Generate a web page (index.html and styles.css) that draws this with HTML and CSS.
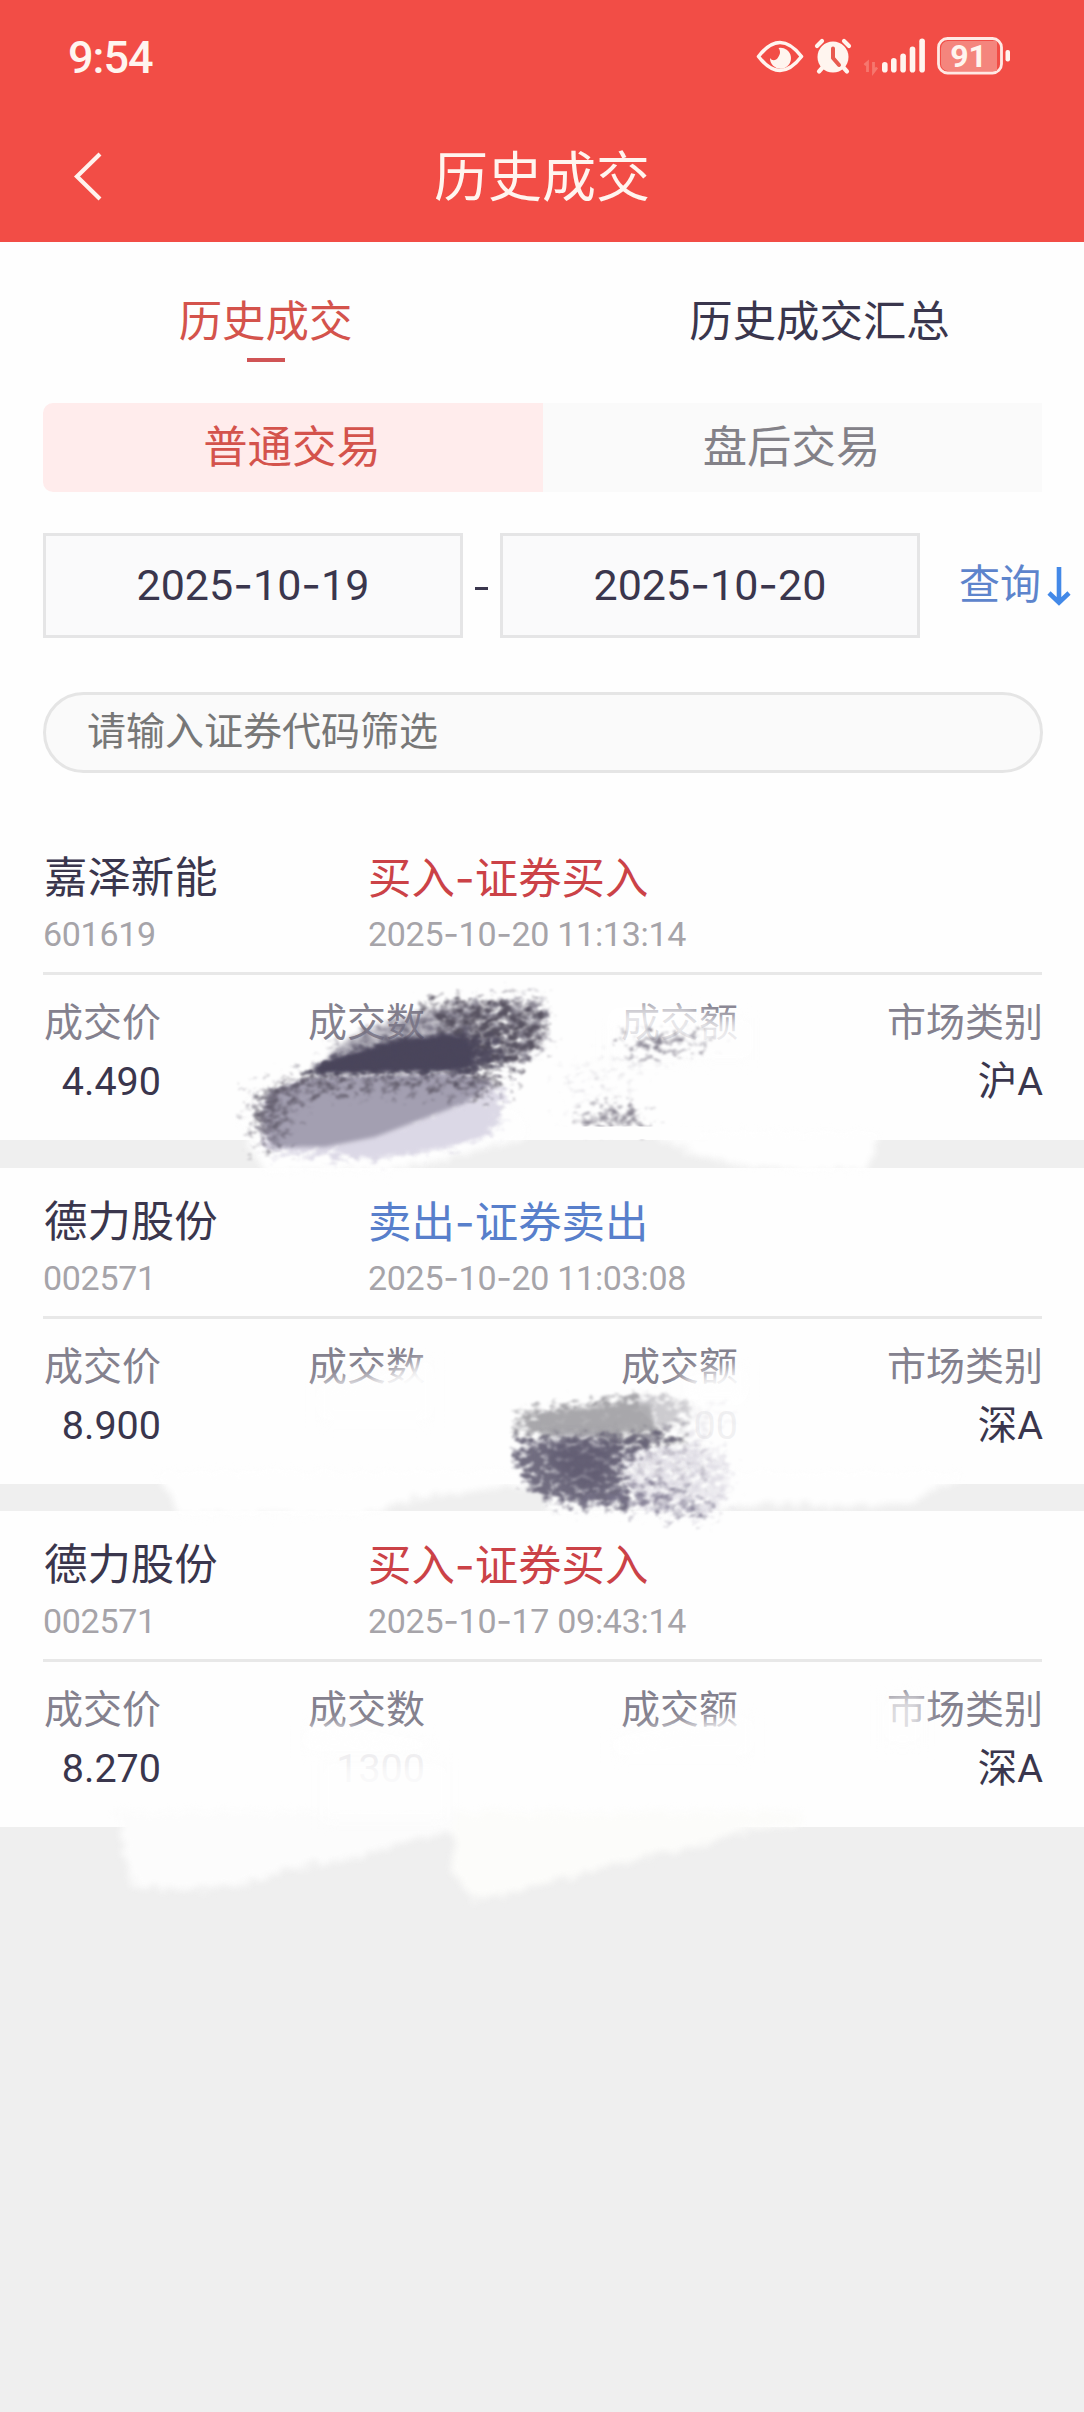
FILE: index.html
```html
<!DOCTYPE html>
<html lang="zh-CN">
<head>
<meta charset="utf-8">
<title>历史成交</title>
<link rel="stylesheet" href="styles.css">
</head>
<body>
<header class="top">
  <div class="status">
    <span class="clock">9:54</span>
    <svg class="status-icons" width="256" height="44" viewBox="756 34 256 44" fill="#fff5ef">
      <path d="M758.500 56.500Q780 28.500 801.500 56.500Q780 84.500 758.500 56.500Z" fill="none" stroke="#fff5ef" stroke-width="3.600" stroke-linejoin="round"/>
      <path d="M778.500 48a10.500 10.500 0 1 1-8.500 10c2 3 6 3 8-.5c1-2 2-3 2-5c0-2-.5-3-1.500-4.500Z"/>
      <circle cx="833" cy="57" r="15.500"/>
      <path d="M817 46l5-5M849 46l-5-5M823 67l-4 4.500M843 67l4 4.500" stroke="#fff5ef" stroke-width="4.200" stroke-linecap="round"/>
      <path d="M833 48.500V58l6 7" fill="none" stroke="#e85b50" stroke-width="4" stroke-linecap="round" stroke-linejoin="round"/>
      <path d="M864.500 65l3-2.500V72M873.500 62v10l3.500-4.500" fill="none" stroke="#f6776e" stroke-width="2.800"/>
      <rect x="882" y="62" width="5.600" height="10.500" rx="2.800"/>
      <rect x="891" y="58" width="5.600" height="14.500" rx="2.800"/>
      <rect x="900.300" y="53.500" width="5.600" height="19" rx="2.800"/>
      <rect x="909.700" y="46.500" width="5.600" height="26" rx="2.800"/>
      <rect x="919.300" y="38.500" width="5.600" height="34" rx="2.800"/>
      <rect x="938.500" y="38.500" width="63" height="34.500" rx="9" fill="none" stroke="#ffe9e4" stroke-width="2.800"/>
      <path d="M948 41h49v30h-49a7 7 0 0 1-7-7V48a7 7 0 0 1 7-7Z" fill="#f4857d"/>
      <rect x="1005.500" y="50" width="4.500" height="11.500" rx="2"/>
      <text class="battery" x="968.500" y="66.800" text-anchor="middle">91</text>
    </svg>
  </div>
  <div class="nav">
    <svg class="back" width="32" height="50" viewBox="0 0 32 50"><path d="M27 3L4 25.500L27 48" fill="none" stroke="#fff3ee" stroke-width="4.200"/></svg>
    <h1>历史成交</h1>
  </div>
</header>

<main class="panel">
  <nav class="tabs">
    <a class="tab active">历史成交</a>
    <a class="tab">历史成交汇总</a>
  </nav>
  <div class="segments">
    <span class="segment active">普通交易</span>
    <span class="segment">盘后交易</span>
  </div>
  <div class="range">
    <span class="date">2025<i>-</i>10<i>-</i>19</span>
    <span class="to"></span>
    <span class="date">2025<i>-</i>10<i>-</i>20</span>
    <a class="query">查询</a>
    <svg class="arrow" width="24" height="40" viewBox="0 0 24 40"><path d="M12 1V36M2 27L12 36.500L22 27" fill="none" stroke="#4389e8" stroke-width="4.600"/></svg>
  </div>
  <div class="search">请输入证券代码筛选</div>
</main>

<section class="list">
  <article class="trade">
    <div class="head">
      <span class="name">嘉泽新能</span><span class="side buy">买入<i>-</i>证券买入</span>
      <span class="meta">601619</span><span class="meta">2025<i>-</i>10<i>-</i>20 11:13:14</span>
    </div>
    <div class="cells">
      <div class="cell"><span class="label">成交价</span><span class="value">4.490</span></div>
      <div class="cell"><span class="label">成交数</span></div>
      <div class="cell"><span class="label">成交额</span></div>
      <div class="cell"><span class="label">市场类别</span><span class="value">沪A</span></div>
    </div>
  </article>
  <article class="trade">
    <div class="head">
      <span class="name">德力股份</span><span class="side sell">卖出<i>-</i>证券卖出</span>
      <span class="meta">002571</span><span class="meta">2025<i>-</i>10<i>-</i>20 11:03:08</span>
    </div>
    <div class="cells">
      <div class="cell"><span class="label">成交价</span><span class="value">8.900</span></div>
      <div class="cell"><span class="label">成交数</span></div>
      <div class="cell"><span class="label">成交额</span><span class="value faint">00</span></div>
      <div class="cell"><span class="label">市场类别</span><span class="value">深A</span></div>
    </div>
  </article>
  <article class="trade">
    <div class="head">
      <span class="name">德力股份</span><span class="side buy">买入<i>-</i>证券买入</span>
      <span class="meta">002571</span><span class="meta">2025<i>-</i>10<i>-</i>17 09:43:14</span>
    </div>
    <div class="cells">
      <div class="cell"><span class="label">成交价</span><span class="value">8.270</span></div>
      <div class="cell"><span class="label">成交数</span><span class="value faint">1300</span></div>
      <div class="cell"><span class="label">成交额</span></div>
      <div class="cell"><span class="label">市场类别</span><span class="value">深A</span></div>
    </div>
  </article>

  <svg class="brush" width="1084" height="1100" viewBox="0 824 1084 1100">
    <defs>
      <filter id="grain" x="-15%" y="-25%" width="130%" height="150%" color-interpolation-filters="sRGB">
        <feTurbulence type="fractalNoise" baseFrequency="0.1 0.16" numOctaves="4" seed="4"/>
        <feColorMatrix values="0 0 0 0 0  0 0 0 0 0  0 0 0 0 0  1 0 0 0 0" result="n"/>
        <feGaussianBlur in="SourceAlpha" stdDeviation="8" result="b"/>
        <feComposite in="b" in2="n" operator="arithmetic" k2="2.1" k3="2.8" k4="-2.25" result="m"/>
        <feMorphology in="SourceGraphic" operator="dilate" radius="12"/>
        <feComposite in2="m" operator="in"/>
        <feGaussianBlur stdDeviation="0.9"/>
      </filter>
      <filter id="speckle" x="-20%" y="-40%" width="140%" height="180%" color-interpolation-filters="sRGB">
        <feTurbulence type="fractalNoise" baseFrequency="0.11 0.16" numOctaves="4" seed="9"/>
        <feColorMatrix values="0 0 0 0 0  0 0 0 0 0  0 0 0 0 0  1 0 0 0 0" result="n"/>
        <feGaussianBlur in="SourceAlpha" stdDeviation="8" result="b"/>
        <feComposite in="b" in2="n" operator="arithmetic" k2="1.2" k3="2.8" k4="-1.95" result="m"/>
        <feMorphology in="SourceGraphic" operator="dilate" radius="10"/>
        <feComposite in2="m" operator="in"/>
        <feGaussianBlur stdDeviation="0.9"/>
      </filter>
      <filter id="soft" x="-20%" y="-30%" width="140%" height="160%"><feGaussianBlur stdDeviation="2"/></filter>
      <filter id="wash" x="-30%" y="-60%" width="160%" height="220%" color-interpolation-filters="sRGB"><feGaussianBlur stdDeviation="8"/></filter>
      <filter id="edge" x="-10%" y="-20%" width="120%" height="140%" color-interpolation-filters="sRGB">
        <feTurbulence type="fractalNoise" baseFrequency="0.12" numOctaves="3" seed="3" result="n"/>
        <feDisplacementMap in="SourceGraphic" in2="n" scale="18" xChannelSelector="R" yChannelSelector="G"/>
        <feGaussianBlur stdDeviation="3.5"/>
      </filter>
    </defs>

    <g fill="#fefefe" filter="url(#edge)">
      <path d="M238 1120L262 1172H387L530 1138L520 1110Z"/>
      <path d="M645 1132L690 1152L745 1168L868 1172L880 1132Z"/>
      <path d="M155 1472L180 1515H360L420 1498L545 1482V1472Z"/>
      <path d="M545 1472V1514H700L760 1503L840 1507L910 1504L968 1472Z"/>
    </g>
    <g fill="#fcfcfc" filter="url(#edge)">
      <path d="M116 1812L124 1850L132 1887L194 1890L242 1885L277 1872L363 1857L408 1840L470 1830V1812Z"/>
      <path d="M455 1812L452 1870L474 1901L542 1886L600 1867L690 1848L730 1834L800 1824V1812Z" fill="#fcfcfa"/>
    </g>

    <g fill="#fefefe" filter="url(#wash)">
      <path d="M605 1010H700V1060H605Z" opacity=".75"/>
      <path d="M605 1000H690V1030H605Z" opacity=".4"/>
      <path d="M690 1018H755V1060H690Z" opacity=".85"/>
      <path d="M315 1385L380 1376L435 1358V1420H315Z"/>
      <path d="M680 1378L750 1366V1395H680Z"/>
      <path d="M300 1730L335 1726L440 1742V1750H300Z"/>
      <path d="M610 1738L680 1726L755 1716V1755H610Z"/>
      <path d="M880 1697L925 1692V1745H880Z" opacity=".75"/>
      <path d="M320 1762H450V1822H320Z" opacity=".8"/>
      <path d="M685 1395H755V1455H685Z" opacity=".45"/>
    </g>

    <g filter="url(#grain)">
      <path d="M312 1068L332 1042L375 1022L425 1007L480 996L538 992L552 1006L552 1042L530 1066L455 1076L330 1078Z" fill="#6e697b" opacity=".72"/>
    </g>
    <path d="M328 1055L350 1037L420 1011L470 1003L485 1066L330 1070Z" fill="#817d8e" opacity=".45" filter="url(#soft)"/>
    <g filter="url(#grain)"><path d="M258 1095L290 1082L470 1074L510 1086L500 1134L445 1150L375 1161L262 1156Z" fill="#dcd9e6"/></g>
    <path d="M330 1150L400 1130L470 1105L496 1112L485 1136L440 1148L370 1158Z" fill="#dbd8e6" filter="url(#soft)"/>
    <path d="M268 1094L310 1077L460 1073L492 1083L465 1103L420 1120L375 1137L325 1147L272 1147L262 1120Z" fill="#a39fb1" filter="url(#soft)"/>
    <g fill="#575260" filter="url(#grain)">
      <path d="M256 1094L285 1075L315 1068L302 1086L278 1100L272 1148L260 1146L254 1118Z" opacity=".75"/>
      <path d="M295 1068H495L510 1082L480 1090L455 1082L320 1082Z" opacity=".75"/>
    </g>
    <g fill="#575260" filter="url(#speckle)">
      <path d="M248 1090L310 1070L340 1090L300 1110L285 1150L256 1150L246 1118Z" opacity=".75"/>
      <path d="M310 1075H500L515 1088L485 1104L455 1094L320 1096Z" opacity=".8"/>
      <path d="M420 1000L510 998L545 1005L548 1042L515 1070L460 1067Z"/>
    </g>
    <path d="M312 1067L335 1058L395 1040L450 1034L470 1040L475 1064L460 1071L390 1072L318 1074Z" fill="#4a455c" filter="url(#soft)"/>
    <g filter="url(#grain)"><path d="M280 1080L330 1056L395 1038L453 1030L505 1036L505 1070L460 1076L390 1075Z" fill="#4a455b" opacity=".85"/></g>

    <g filter="url(#speckle)">
      <path d="M622 1036L660 1034L705 1036L712 1046L640 1052Z" fill="#5e5969"/>
      <path d="M585 1118L615 1106L640 1110L655 1130H580Z" fill="#6d6876"/>
      <path d="M560 1064L625 1048L725 1043L650 1066L630 1100L650 1130L555 1128Z" fill="#b6b3be" opacity=".4"/>
    </g>
    <path d="M540 1126.500H700V1139H540Z" fill="#fefefe"/>

    <g filter="url(#grain)">
      <path d="M514 1410L590 1401L655 1392L680 1400L676 1432L600 1440L514 1438Z" fill="#a8a7ab"/>
      <path d="M650 1396L730 1402L742 1420L690 1436Z" fill="#e4e3e8" opacity=".6"/>
      <path d="M600 1440L690 1436L728 1448L735 1495L710 1520L630 1512Z" fill="#d9d7e0" opacity=".75"/>
    </g>
    <path d="M540 1415L600 1406L650 1404L655 1428L600 1436L540 1436Z" fill="#a8a7ab" opacity=".8" filter="url(#soft)"/>
    <g filter="url(#grain)">
      <path d="M514 1436L600 1436L680 1428L686 1440L645 1450L622 1468L642 1510L560 1508L526 1490L512 1463Z" fill="#625d72" opacity=".9"/>
    </g>
    <path d="M548 1442L612 1440L612 1462L606 1490L575 1490L548 1465Z" fill="#5e596f" opacity=".75" filter="url(#wash)"/>
    <g filter="url(#speckle)">
      <path d="M555 1498L640 1485L720 1502L706 1522L630 1512Z" fill="#77728a" opacity=".85"/>
      <path d="M615 1445L700 1440L715 1480L640 1500Z" fill="#8f8b9c" opacity=".55"/>
    </g>
  </svg>
</section>
</body>
</html>
```
FILE: styles.css
```css
* { box-sizing: border-box; }

body {
  margin: 0;
  min-height: 2412px;
  background: #efefef;
  color: #3a364d;
  font-family: Roboto, "Noto Sans CJK SC", sans-serif;
  font-size: 43.4px;
  line-height: 50px;
}

/* wide, vertically centred dash */
i {
  font-family: Inter, sans-serif;
  font-style: normal;
}

.top {
  height: 242px;
  background: #f24d46;
  color: #fff5ef;
}

.status {
  display: flex;
  justify-content: space-between;
  padding: 34px 72px 0 68px;
  height: 112px;
}

.clock {
  font-size: 45px;
  font-weight: 500;
  line-height: 48px;
  letter-spacing: -1px;
}

.battery {
  font: 700 32px Roboto, sans-serif;
}

.nav {
  display: grid;
  grid-template-columns: 74px 1fr 74px;
  height: 130px;
  padding-top: 32px;
}

.back { margin-top: 7px; margin-left: 73px; }

h1 {
  margin: 0;
  font-size: 54px;
  font-weight: 400;
  line-height: 70px;
  text-align: center;
}

.panel {
  height: 582px;
  background: #fefefe;
  padding: 53px 42px 0 43px;
}

.tabs {
  display: grid;
  grid-template-columns: 531px 527px;
  column-gap: 25px;
  margin: 0 -42px 0 -43px;
  height: 108px;
}

.tab {
  display: flex;
  flex-direction: column;
  align-items: center;
  line-height: 56px;
}

.tab.active { color: #d4534c; }

.tab.active::after {
  content: "";
  width: 38px;
  height: 4px;
  margin-top: 7px;
  background: #d05455;
}

.segments {
  display: grid;
  grid-template-columns: 500px 1fr;
  height: 89px;
  font-size: 44.4px;
  line-height: 90px;
  text-align: center;
}

.segment { background: #fafafa; color: #838188; height: 89px; padding-right: 2px; }

.segment.active {
  background: #ffecec;
  color: #d4534c;
  border-radius: 10px 0 0 10px;
}

.range {
  display: flex;
  align-items: center;
  margin: 41px -42px 0 0;
  height: 105px;
}

.date {
  width: 420px;
  height: 105px;
  border: 3px solid #e5e5e6;
  background: #fafafb;
  line-height: 96px;
  font-size: 43px;
  text-align: center;
}

.to {
  width: 13px;
  height: 3px;
  margin: 5px 12px 0;
  background: #3a364d;
}

.query {
  margin: -2px 0 0 39px;
  font-size: 41px;
  color: #5d84cc;
  white-space: nowrap;
}

.arrow { margin-left: 6px; flex: none; }

.search {
  height: 81px;
  margin: 54px -1px 0 0;
  padding-left: 41px;
  border: 3px solid #e5e5e5;
  border-radius: 41px;
  background: #fafafa;
  color: #777;
  font-size: 39px;
  line-height: 75px;
}

.list {
  position: relative;
  display: flex;
  flex-direction: column;
  gap: 27.5px;
}

.trade {
  height: 316px;
  padding: 28px 42px 0 43px;
  background: #fefefe;
}

.head {
  display: grid;
  grid-template-columns: 325px 1fr;
  grid-template-rows: 54px 66px;
  border-bottom: 3px solid #e8e8e8;
}

.name { line-height: 54px; padding-left: 1px; }
.side { line-height: 52px; }
.buy { color: #cb4247; }
.sell { color: #587fcb; }

.meta {
  color: #a6a4a9;
  font-size: 34px;
  line-height: 56px;
  letter-spacing: -.3px;
}

.cells {
  display: grid;
  grid-template-columns: 264px 313px 1fr auto;
  padding: 19px 0 0 1px;
}

.cell {
  display: grid;
  justify-self: start;
  grid-template-rows: 58px 56px;
  justify-items: end;
  font-size: 39px;
  line-height: 58px;
}

.cell:last-child { margin-right: -1px; }

.label { color: #84818e; }
.value { font-size: 39.5px; line-height: 59px; }
.faint { color: #e6e5e8; }

.brush {
  position: absolute;
  left: 0;
  top: 0;
  pointer-events: none;
}
```
